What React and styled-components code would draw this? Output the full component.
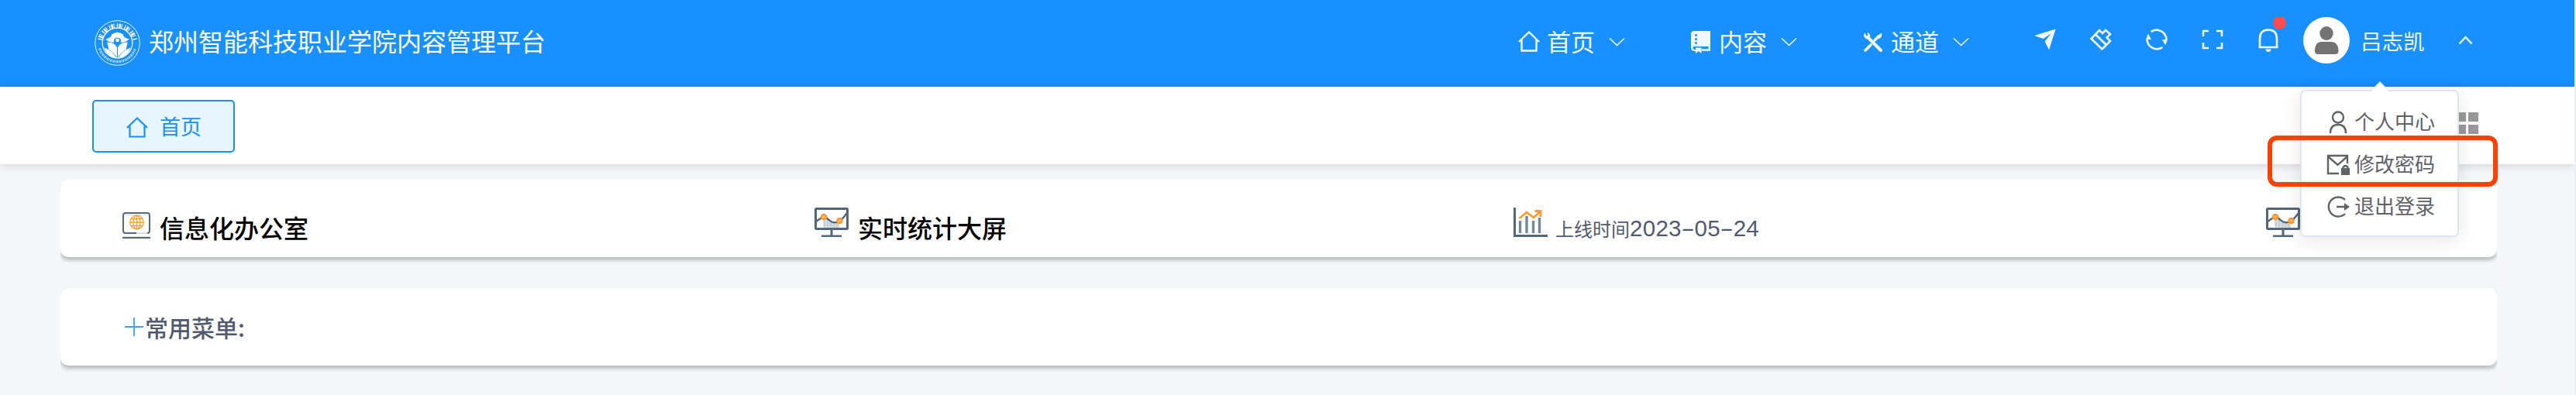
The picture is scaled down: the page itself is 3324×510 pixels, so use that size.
import React from "react";
import styled, { createGlobalStyle } from "styled-components";

const GlobalStyle = createGlobalStyle`
	* {
		box-sizing: border-box;
	}

	body {
		margin: 0;
		overflow: hidden;
		background-color: #f5f7f9;
		font-family: "Liberation Sans", "Noto Sans CJK SC", sans-serif;
		color: #515a6e;
	}
`;

const Page = styled.div`
	position: relative;
	width: 3324px;
	height: 510px;
	overflow: hidden;
	border-right: 2px solid #eceef1;
	background-color: #f6f7fa;
`;

const Header = styled.header`
	display: flex;
	height: 112px;
	padding-left: 122px;
	margin-right: -2px;
	background-color: #1890ff;
	color: #f2f8ff;
	white-space: nowrap;
`;

const Brand = styled.div`
	display: flex;
	align-items: center;
	width: 1836px;
	height: 110px;
	font-size: 32px;
	line-height: 48px;
	color: #fff;

	svg {
		margin-right: 11px;
	}
`;

const NavItem = styled.div`
	display: flex;
	align-items: center;
	width: 222px;
	height: 108px;
	font-size: 31px;
	line-height: 48px;
`;

const NavText = styled.span`
	margin-top: 3px;
`;

const NavIcon = styled.svg`
	display: block;
	width: 30px;
	height: 30px;
	margin-right: 8px;
	fill: none;
	stroke: currentColor;
	stroke-width: 2.4;
`;

const Chevron = styled.svg`
	display: block;
	width: ${props => props.width}px;
	height: 12px;
	margin-left: ${props => props.offset || 0}px;
	fill: none;
	stroke: currentColor;
	stroke-width: ${props => props.weight || 1.6};
`;

const Tools = styled.div`
	display: flex;
	align-items: center;
	gap: 42px;
	height: 102px;
`;

const ToolIcon = styled.svg`
	display: block;
	width: 30px;
	height: 30px;
	fill: none;
	stroke: currentColor;
	stroke-width: 2.6;
	overflow: visible;
`;

const Bell = styled.div`
	position: relative;
`;

const Dot = styled.i`
	position: absolute;
	top: -15px;
	right: -8px;
	width: 17px;
	height: 17px;
	border-radius: 50%;
	background-color: #ff4d4f;
`;

const User = styled.div`
	display: flex;
	align-items: center;
	height: 104px;
	margin-left: 30px;
	font-size: 27.5px;
`;

const UserName = styled.span`
	width: 112px;
	margin-left: 14px;
`;

const TabBar = styled.div`
	display: flex;
	align-items: center;
	justify-content: space-between;
	height: 100px;
	padding: 2px 124px 0 119px;
	background: linear-gradient(#f5f5f5, #f5f5f5) 79px 0 / 3158px 2px no-repeat #fff;
	box-shadow: 0 2px 12px rgba(0, 0, 0, 0.15);
`;

const Tab = styled.div`
	display: flex;
	align-items: center;
	width: 184px;
	height: 68px;
	padding: 3px 0 0 41px;
	border: 2px solid #1890ff;
	border-radius: 5px;
	background-color: #e7f5ff;
	color: #1890ff;
	font-size: 27px;
	line-height: 40px;

	svg {
		margin-right: 14px;
	}
`;

const Tiles = styled.div`
	display: grid;
	grid-template-columns: 13px 13px;
	gap: 4px 3px;
	margin-top: -8px;

	i {
		height: 12px;
		background-color: #999;
	}
`;

const Content = styled.main`
	height: 298px;
	margin: 0 100px 0 78px;
	padding-top: 20px;
	background: linear-gradient(transparent 30px, #f3f7f8 30px);
	overflow: hidden;
`;

const Card = styled.section`
	display: flex;
	height: 100px;
	margin-bottom: 40px;
	border-radius: 10px;
	background-color: #fff;
	box-shadow: 0 4px 5px rgba(0, 0, 0, 0.24);
	white-space: nowrap;
`;

const Stat = styled.div`
	display: flex;
	width: ${props => props.width}px;
	padding-top: 36px;
	margin-left: ${props => props.offset || 0}px;
	flex-shrink: 0;

	svg {
		display: block;
		flex-shrink: 0;
	}
`;

const StatTitle = styled.strong`
	margin: 4px 0 0 12px;
	color: #000;
	font-size: 32px;
	font-weight: 500;
	line-height: 48px;
`;

const Launch = styled.span`
	margin: 9px 0 0 10px;
	font-size: 24px;
	line-height: 36px;
`;

const LaunchDate = styled.span`
	font-size: 29.5px;
	letter-spacing: 0.3px;
`;

const Dash = styled.span`
	display: inline-block;
	width: 16.7px;
	text-align: center;
	transform: scaleX(1.8);
`;

const QuickMenu = styled.div`
	display: flex;
	align-items: center;
	height: 100px;
	padding-left: 83px;
	font-family: "Noto Sans CJK SC", sans-serif;
	font-size: 30px;
	font-weight: 500;
	line-height: 44px;

	svg {
		margin-right: 2px;
	}
`;

const Menu = styled.div`
	position: absolute;
	top: 116px;
	left: 2968px;
	width: 205px;
	height: 190px;
	padding-top: 13px;
	border: 2px solid #e0e4ee;
	border-radius: 7px;
	background-color: #fff;
	box-shadow: 0 4px 24px rgba(0, 0, 0, 0.1);

	&::before {
		content: "";
		position: absolute;
		top: -9px;
		left: 92px;
		width: 17px;
		height: 17px;
		border: solid #e4e7ed;
		border-width: 1px 0 0 1px;
		background-color: #fff;
		transform: rotate(45deg);
	}
`;

const MenuItem = styled.div`
	position: relative;
	display: flex;
	align-items: center;
	height: 54.5px;
	padding-left: 32px;
	color: #606266;
	font-size: 26px;
	line-height: 40px;
	white-space: nowrap;
`;

const MenuIcon = styled.svg`
	width: 30px;
	height: 30px;
	margin-right: 6px;
	fill: none;
	stroke: currentColor;
	stroke-width: 2.4;
	flex-shrink: 0;
`;

const Highlight = styled.div`
	position: absolute;
	top: 175px;
	left: 2926px;
	width: 297px;
	height: 66px;
	border: 6px solid #ff4000;
	border-radius: 12px;
`;

const HomeShape = () => <path d="M2 15 15 2.5 28 15M5.5 12.5V26.5H24.5V12.5" />;

const Down = () => (
	<Chevron width={21} offset={18} viewBox="0 0 21 12">
		<path d="M1 1.5 10.5 10.5 20 1.5" />
	</Chevron>
);

const Seal = () => (
	<svg width="59" height="59" viewBox="0 0 58 58" fill="#fff">
		<circle cx="29" cy="29" r="28.3" fill="none" stroke="#fff" strokeWidth="0.9" />
		<circle cx="29" cy="29" r="19" fill="none" stroke="#fff" strokeWidth="1.2" />
		<path d="M7 25A22.5 22.5 0 0 1 51 25" fill="none" stroke="#fff" strokeWidth="6" strokeDasharray="1.4 1.3 2.4 .8 1 3" />
		<path d="M6.5 36A23.5 23.5 0 0 0 51.5 36" fill="none" stroke="#fff" strokeWidth="3" strokeDasharray="1.6 .9 .8 .8" opacity=".75" />
		<path d="M14 24Q21 23 22 18Q29 13 36 18Q37 23 44 24Q39 29 33 28Q35 24 31 22.5Q27 21 25 24Q24 26 25 28Q19 29 14 24Z" />
		<circle cx="29" cy="25.5" r="2.3" />
		<path d="M16 28Q26 28 28.5 35V48Q25 41 18 37Z" />
		<path d="M42 28Q32 28 29.5 35V48Q33 41 40 37Z" />
		<path d="M12 35Q24 39 28 49Q17 48 12 35ZM46 35Q34 39 30 49Q41 48 46 35Z" />
	</svg>
);

const Monitor = () => (
	<svg width="44" height="38" viewBox="0 0 44 38" fill="none">
		<path d="M11 25V15L17 14 24 18 32 19V26Z" fill="#d8dde2" />
		<path d="M13 26V16M17 26V16M21 26V18M25 26V20M29 26V20" stroke="#b8c0c8" />
		<rect x="1.5" y="1.5" width="41" height="26" rx="1" stroke="#526878" strokeWidth="3" />
		<path d="M2 18 11 12Q16 13 20 17T32 18Q36 15 42 7" stroke="#526878" strokeWidth="2.4" />
		<path d="M22 28V37M9 37H35" stroke="#526878" strokeWidth="3" />
		<circle cx="12" cy="12" r="3" stroke="#f93" strokeWidth="2.6" fill="#ffc46b" />
		<circle cx="32.5" cy="17" r="3" stroke="#f93" strokeWidth="2.6" fill="#ffc46b" />
	</svg>
);

const Laptop = () => (
	<svg width="36" height="34" viewBox="0 0 36 34" fill="none">
		<rect x="1" y="1" width="34" height="26" rx="3" stroke="#566b7a" strokeWidth="2" />
		<path d="M3.500 3.500H32.500" stroke="#dce1e4" />
		<path d="M18 27H32" stroke="#dce1e4" strokeWidth="2" />
		<path d="M0 31.500H36" stroke="#dce1e4" />
		<path d="M0 33H36" stroke="#566b7a" strokeWidth="2" />
		<g stroke="#f9a13d" strokeWidth="1.300">
			<circle cx="18.500" cy="13" r="8.800" />
			<ellipse cx="18.500" cy="13" rx="4.500" ry="8.800" />
			<path d="M18.500 4V22M10 13H27M11.500 8.500H25.500M11.500 17.500H25.500" />
		</g>
	</svg>
);

const Trend = () => (
	<svg width="44" height="38" viewBox="0 0 44 38" fill="none">
		<path d="M1.500 0V36.500H44" stroke="#526878" strokeWidth="3" />
		<path d="M8.500 17V33M17 11V33M25.500 17V33M33.500 13V33" stroke="#748895" strokeWidth="3.400" />
		<path d="M7.500 14 17 6 26 13 34.500 5M27.500 4.500H35V12" stroke="#ff9a30" strokeWidth="2.800" />
	</svg>
);

const App = () => (
	<>
		<GlobalStyle />
		<Page>
			<Header>
				<Brand>
					<Seal />
					郑州智能科技职业学院内容管理平台
				</Brand>
				<NavItem>
					<NavIcon viewBox="0 0 30 30">
						<HomeShape />
					</NavIcon>
					<NavText>首页</NavText>
					<Down />
				</NavItem>
				<NavItem>
					<NavIcon viewBox="0 0 30 30">
						<path d="M6 1H27V21H6Q4.500 21 4.500 22.500T6 25H8V27H6Q2 26.500 2 22V5Q2 1 6 1Z" fill="currentColor" stroke="none" />
						<path d="M8.500 5V8M8.500 10V13M8.500 15V18" stroke="#1890ff" />
						<path d="M16 25.500H25.800V20" />
						<path d="M8 22.500H15.500V30L11.750 27 8 30Z" fill="currentColor" stroke="none" />
					</NavIcon>
					<NavText>内容</NavText>
					<Down />
				</NavItem>
				<NavItem>
					<NavIcon viewBox="0 0 30 30">
						<path d="M9 10 25 26" strokeWidth="4" strokeLinecap="round" />
						<path d="M4 4Q2 11 9 11 13 6 8 3.500L9 7 6.500 8Z" fill="currentColor" strokeWidth="1" />
						<path d="M17 13 22 8M12 19 5 26" strokeWidth="3.600" strokeLinecap="round" />
						<path d="M20 8 26 4 25 9 22 11Z" fill="currentColor" strokeWidth="1" />
					</NavIcon>
					<NavText>通道</NavText>
					<Down />
				</NavItem>
				<Tools>
					<ToolIcon viewBox="0 0 30 30">
						<path d="M28.500 1.500 1 10 12.500 14 22.500 7.500 14.500 17.500 20 28.500Z" fill="currentColor" stroke="none" />
					</ToolIcon>
					<ToolIcon viewBox="0 0 30 30">
						<path d="M2.500 14 13 3 17 7 21 3 27 8 22.500 12.500 27 17 16.500 27.500ZM8 8.500 22 22" />
					</ToolIcon>
					<ToolIcon viewBox="0 0 30 30">
						<path d="M7.500 5A12.800 12.800 0 0 1 27.500 15M22.500 25A12.800 12.800 0 0 1 2.500 15" />
						<path d="M22 15H29L26 22.500ZM8 15H1L4 7.500Z" fill="currentColor" stroke="none" />
					</ToolIcon>
					<ToolIcon viewBox="0 0 30 30">
						<path d="M3 11V4H10M20 4H27V11M27 19V26H20M10 26H3V19" />
					</ToolIcon>
					<Bell>
						<ToolIcon viewBox="0 0 30 30">
							<path d="M4 25V14Q4 2.500 15 2.500T26 14V25M2.500 25H27.500" />
							<path d="M11.500 27.500H18.500Q18 31 15 31T11.500 27.500Z" fill="currentColor" stroke="none" />
						</ToolIcon>
						<Dot />
					</Bell>
				</Tools>
				<User>
					<svg width="60" height="60" viewBox="0 0 60 60">
						<circle cx="30" cy="30" r="30" fill="#fff" />
						<ellipse cx="30" cy="21" rx="8.700" ry="9" fill="#737373" />
						<path d="M15 42Q16 32 23 32H37Q44 32 45.500 42 46 48 41 48H19Q14.500 48 15 42Z" fill="#737373" />
					</svg>
					<UserName>吕志凯</UserName>
					<Chevron width={19} offset={14} weight={2.5} viewBox="0 0 19 12">
						<path d="M1.500 10.500 9.500 2 17.500 10.500" />
					</Chevron>
				</User>
			</Header>
			<TabBar>
				<Tab>
					<svg width="30" height="30" viewBox="0 0 30 30" fill="none" stroke="currentColor" strokeWidth="2.200">
						<HomeShape />
					</svg>
					首页
				</Tab>
				<Tiles>
					<i />
					<i />
					<i />
					<i />
				</Tiles>
			</TabBar>
			<Content>
				<Card>
					<Stat width={893} offset={80}>
						<svg width="36" height="46" viewBox="0 -6 36 46">
							<Laptop />
						</svg>
						<StatTitle>信息化办公室</StatTitle>
					</Stat>
					<Stat width={902}>
						<Monitor />
						<StatTitle>实时统计大屏</StatTitle>
					</Stat>
					<Stat width={971}>
						<Trend />
						<Launch>
							上线时间
							<LaunchDate>
								2023<Dash>-</Dash>05<Dash>-</Dash>24
							</LaunchDate>
						</Launch>
					</Stat>
					<Stat width={44}>
						<Monitor />
					</Stat>
				</Card>
				<Card>
					<QuickMenu>
						<svg width="24" height="24" viewBox="0 0 24 24" stroke="#409eff" strokeWidth="1.800">
							<path d="M0 12H24M12 0V24" />
						</svg>
						常用菜单:
					</QuickMenu>
				</Card>
			</Content>

			<Menu>
				<MenuItem>
					<MenuIcon viewBox="0 0 30 30">
						<circle cx="15" cy="8.500" r="7" />
						<path d="M5 29Q5 18 15 18T25 29" />
					</MenuIcon>
					个人中心
				</MenuItem>
				<MenuItem>
					<MenuIcon viewBox="0 0 30 30">
						<path d="M16 26H2V3H27V13M2 4 14.500 15 27 4" />
						<rect x="19" y="19" width="11" height="9" fill="currentColor" stroke="none" />
						<path d="M21.500 20V18Q24.500 14 27.500 18V20" />
					</MenuIcon>
					修改密码
				</MenuItem>
				<MenuItem>
					<MenuIcon viewBox="0 0 30 30">
						<path d="M24 6A12.500 12.500 0 1 0 24 24M13 15H25" />
						<path d="M23 10 30 15 23 20Z" fill="currentColor" stroke="none" />
					</MenuIcon>
					退出登录
				</MenuItem>
			</Menu>
			<Highlight />
		</Page>
	</>
);

export default App;
